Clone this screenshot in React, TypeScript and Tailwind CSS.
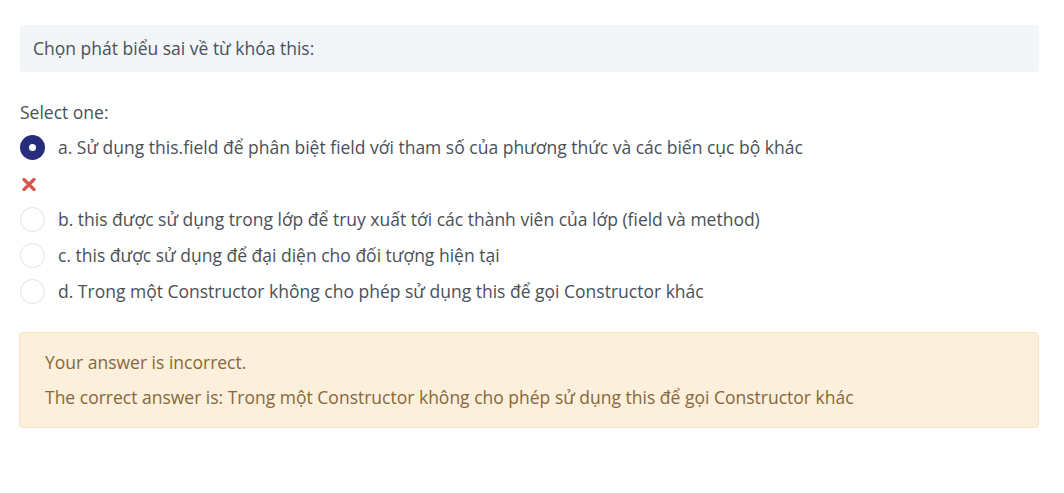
import React from 'react';

const options = [
  { key: 'a', text: 'a. Sử dụng this.field để phân biệt field với tham số của phương thức và các biến cục bộ khác', checked: true },
  { key: 'b', text: 'b. this được sử dụng trong lớp để truy xuất tới các thành viên của lớp (field và method)', checked: false },
  { key: 'c', text: 'c. this được sử dụng để đại diện cho đối tượng hiện tại', checked: false },
  { key: 'd', text: 'd. Trong một Constructor không cho phép sử dụng this để gọi Constructor khác', checked: false },
];

const Radio: React.FC<{ checked: boolean }> = ({ checked }) =>
  checked ? (
    <span className="w-[25px] h-[25px] rounded-full bg-[#262d7d] flex items-center justify-center shrink-0">
      <span className="w-[7px] h-[7px] rounded-full bg-white" />
    </span>
  ) : (
    <span className="w-[25px] h-[25px] rounded-full border border-[#dfe4e8] bg-white shrink-0" />
  );

const App: React.FC = () => {
  return (
    <div className="w-[1064px] h-[493px] bg-white px-[20px] pt-[25px] text-[17.5px] text-[#4b5057] font-['Open_Sans',sans-serif]">
      <div className="w-[1019px] h-[47px] bg-[#f2f6f9] rounded-[4px] px-[13px] flex items-center">
        Chọn phát biểu sai về từ khóa this:
      </div>

      <div className="mt-[28px] leading-[24px]">Select one:</div>

      <div className="mt-[5px] flex flex-col">
        {options.map((o) => (
          <React.Fragment key={o.key}>
            <div className="h-[36px] flex items-center gap-[13px]">
              <Radio checked={o.checked} />
              <span>{o.text}</span>
            </div>
            {o.checked && (
              <div className="h-[36px] flex items-center pl-[2px] pt-[3px]">
                <svg width="14" height="13" viewBox="0 0 14 13">
                  <path d="M2 1.5 L12 11.5 M12 1.5 L2 11.5" stroke="#d9534f" strokeWidth="3.2" strokeLinecap="round" />
                </svg>
              </div>
            )}
          </React.Fragment>
        ))}
      </div>

      <div className="mt-[23px] w-[1020px] -ml-[1px] h-[96px] bg-[#fcefdc] border border-[#fbe3c2] rounded-[4px] px-[25px] pb-[2px] flex flex-col justify-center gap-[13px] text-[#86683b]">
        <div className="leading-[22px]">Your answer is incorrect.</div>
        <div className="leading-[22px]">The correct answer is: Trong một Constructor không cho phép sử dụng this để gọi Constructor khác</div>
      </div>
    </div>
  );
};

export default App;
